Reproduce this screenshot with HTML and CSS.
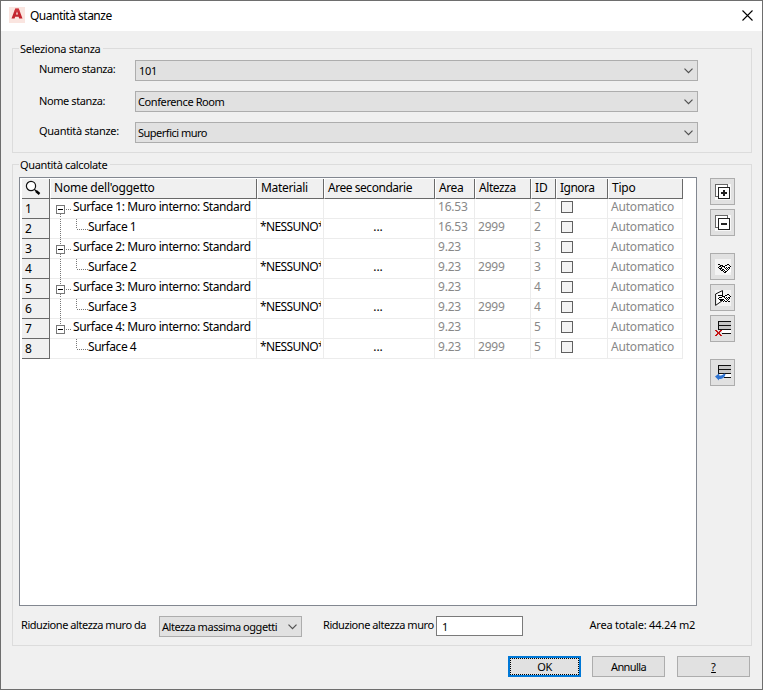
FILE: index.html
```html
<!DOCTYPE html>
<html lang="it">
<head>
<meta charset="utf-8">
<title>Quantità stanze</title>
<link rel="stylesheet" href="styles.css">
</head>
<body>
<main class="dialog">
  <header class="titlebar">
    <svg class="logo" width="16" height="16" viewBox="0 0 16 16"><rect width="16" height="16" fill="#fae5e0"/><path d="M2.5 11.500 6.300 1.500h3.400l3.800 10h-3.300l-.6-1.800H6.200l-.6 1.800z" fill="#c2252e"/><path d="M7 7.500 8 4.200l1 3.300z" fill="#fae5e0"/><path d="M6.300 1.500h3.400l1.600 4.200L8 4.200 4.700 5.700z" fill="#d9434a" opacity=".5"/></svg>
    <h1>Quantità stanze</h1>
    <svg class="close" width="11" height="11" viewBox="0 0 11 11"><path d="M.5.5l10 10M10.500.5l-10 10" stroke="#000" stroke-width="1.1"/></svg>
  </header>

  <section class="group select-group">
    <h2 class="caption sel-cap">Seleziona stanza</h2>
    <div class="field"><label class="l1">Numero stanza:</label><div class="combo"><span class="num">101</span><svg width="9" height="6" viewBox="0 0 9 6"><path d="M.5.7l4 4 4-4" fill="none" stroke="#505050" stroke-width="1.2"/></svg></div></div>
    <div class="field"><label class="l2">Nome stanza:</label><div class="combo"><span class="conf">Conference Room</span><svg width="9" height="6" viewBox="0 0 9 6"><path d="M.5.7l4 4 4-4" fill="none" stroke="#505050" stroke-width="1.2"/></svg></div></div>
    <div class="field"><label class="l3">Quantità stanze:</label><div class="combo"><span class="sup">Superfici muro</span><svg width="9" height="6" viewBox="0 0 9 6"><path d="M.5.7l4 4 4-4" fill="none" stroke="#505050" stroke-width="1.2"/></svg></div></div>
  </section>

  <section class="group calc-group">
    <h2 class="caption calc-cap">Quantità calcolate</h2>
    <div class="work">
      <div class="table">
        <div class="row head">
          <div class="corner"><svg width="16" height="16" viewBox="0 0 16 16"><circle cx="6" cy="6" r="4.6" fill="#fff" stroke="#111" stroke-width="1.2"/><path d="M9.4 9.400l2 2" stroke="#000" stroke-width="1.3"/><path d="M11 11l3.500 3" stroke="#000" stroke-width="2.4"/></svg></div>
          <div><span class="h-nome">Nome dell'oggetto</span></div><div><span class="h-mat">Materiali</span></div><div><span class="h-aree">Aree secondarie</span></div><div><span class="h-area">Area</span></div><div><span class="h-alt">Altezza</span></div><div>ID</div><div><span class="h-ign">Ignora</span></div><div><span class="h-tipo">Tipo</span></div>
        </div>
        <div id="rows"></div>
      </div>
      <nav class="tools">
        <button><svg width="16" height="16" viewBox="0 0 16 16" shape-rendering="crispEdges"><path fill="#f8f8f8" d="M0 0h16v16H0z"/><path fill="#fff" stroke="#666" d="M.5.5h12v12H.5z"/><path fill="#fff" stroke="#222" d="M3.500 3.500h11v11h-11z"/><path d="M6 9h6M9 6v6" stroke="#222" stroke-width="2"/></svg></button>
        <button><svg width="16" height="16" viewBox="0 0 16 16" shape-rendering="crispEdges"><path fill="#f8f8f8" d="M0 0h16v16H0z"/><path fill="#fff" stroke="#666" d="M.5.5h12v12H.5z"/><path fill="#fff" stroke="#222" d="M3.500 3.500h11v11h-11z"/><path d="M6 9h6" stroke="#222" stroke-width="2"/></svg></button>
        <button class="gap"><svg width="16" height="16" viewBox="0 0 16 16"><path fill="#f3f3f3" d="M0 0h16v16H0z"/><path fill="#fff" d="M8 6l8 2v5l-5 2-3-5z"/><g shape-rendering="crispEdges" fill="none" stroke="#000"><path d="M3 5.500h2M4 7.500h2M12 5.500h2M10 6.500h2M14 6.500h1M15 7.500h1M5 6.500h3M7 7.500h3M3 8.500h1M4 9.500h3M6 8.500h1M9 8.500h1M11 8.500h1M13 8.500h2M5 10.500h1M7 10.500h2M10 9.500h1M12 9.500h1M14 9.500h1M6 11.500h2M9 11.500h1M11 10.500h1M13 10.500h1M8 12.500h1M10 12.500h2M12 11.500h1M9 13.500h2"/></g></svg></button>
        <button><svg width="16" height="16" viewBox="0 0 16 16"><path fill="#f3f3f3" d="M0 0h16v16H0z"/><path d="M.6 4v11.400L7.500 10.500V.600z" fill="#fff" stroke="#111"/><path fill="#fff" d="M5 6l10 0v4l-5 3-5-3z"/><g transform="translate(0 -1)" shape-rendering="crispEdges" fill="none" stroke="#000"><path d="M3 6.500h2M4 8.500h2M12 5.500h2M10 6.500h2M14 6.500h1M15 7.500h1M5 6.500h3M7 7.500h3M3 9.500h1M4 10.500h3M6 8.500h1M9 8.500h1M11 8.500h1M13 8.500h2M5 11.500h1M7 10.500h2M10 9.500h1M12 9.500h1M14 9.500h1M6 11.500h2M9 11.500h1M11 10.500h1M13 10.500h1M8 12.500h1M10 12.500h2M12 11.500h1M13 12.500h2"/></g></svg></button>
        <button><svg width="16" height="16" viewBox="0 0 16 16" shape-rendering="crispEdges"><path fill="#c8c8c8" d="M3 1h13v8H3z"/><path fill="#fff" d="M7 9h9v4H7z"/><path d="M3.500 9V.5H16M3 4.500h13M3 8.500h13M7 12.500h9" fill="none" stroke="#111"/><path d="M.5 9l6 6M6.500 9l-6 6" stroke="#c41515" stroke-width="2"/></svg></button>
        <button class="gap"><svg width="16" height="16" viewBox="0 0 16 16"><g shape-rendering="crispEdges"><path fill="#c8c8c8" d="M3 1h13v8H3z"/><path fill="#fff" d="M5 9h11v4H5z"/><path d="M3.500 9V.5H16M3 4.500h13M3 8.500h13M9 12.500h7" fill="none" stroke="#111"/></g><path d="M0 11.500l4-3v2c2.500.1 4-.5 5-2l1.500.5C10 12 8 14 4 14v1.500z" fill="#2f73d0"/></svg></button>
      </nav>
    </div>
    <div class="footer">
      <span class="f1">Riduzione altezza muro da</span>
      <div class="combo small"><span class="amo">Altezza massima oggetti</span><svg width="9" height="6" viewBox="0 0 9 6"><path d="M.5.7l4 4 4-4" fill="none" stroke="#505050" stroke-width="1.2"/></svg></div>
      <span class="f2">Riduzione altezza muro</span>
      <div class="input">1</div>
      <span class="f3">Area totale: 44.24 m2</span>
    </div>
  </section>

  <div class="actions">
    <button class="btn ok"><span>OK</span></button><button class="btn"><span class="ann">Annulla</span></button><button class="btn"><u>?</u></button>
  </div>
</main>
<script src="rows.js"></script>
</body>
</html>
```
FILE: rows.js
```js
const rooms = [[1, '16.53', 2], [2, '9.23', 3], [3, '9.23', 4], [4, '9.23', 5]];
const dots = 'stroke="#777" stroke-dasharray="1 1" fill="none"';
let line = 0;
const row = (tree, name, mat, sub, area, height, id) =>
  `<div class="row"><div class="idx">${++line}</div><div class="name">${tree}${name}</div><div class="mat"><span>${mat}</span></div><div class="sub">${sub}</div><div class="v">${area}</div><div class="v">${height}</div><div class="v">${id}</div><div class="chk"><i></i></div><div class="v auto"><span>Automatico</span></div></div>`;
document.getElementById('rows').innerHTML = rooms.map(([n, area, id], i) => {
  const up = i > 0 ? `<path d="M10.5 0v6" ${dots}/>` : '';
  const down = i < 3 ? `<path d="M10.5 15v5" ${dots}/>` : '';
  const through = i < 3 ? `<path d="M10.5 0v20" ${dots}/>` : '';
  const parent = `<svg width="38" height="20" shape-rendering="crispEdges">${up}${down}<path d="M6.500 6.500h8v8h-8z" fill="#fff" stroke="#777"/><path d="M8 10.500h5" stroke="#000"/><path d="M16 10.500h6" ${dots}/></svg>`;
  const child = `<svg width="38" height="20" shape-rendering="crispEdges">${through}<path d="M26.500 0v10" ${dots}/><path d="M27 10.500h11" ${dots}/></svg>`;
  return row(parent, `<span class="parent">Surface ${n}: Muro interno: Standard</span>`, '', '', area, '', id)
    + row(child, `<span class="child">Surface ${n}</span>`, '*NESSUNO*', '...', area, '2999', id);
}).join('');
```
FILE: styles.css
```css
* { box-sizing: border-box; }
body { margin: 0; font: 11px/14px "Noto Sans", sans-serif; color: #000; }
.dialog { width: 763px; height: 690px; background: #f0f0f0; border: 1px solid #6e6e6e; display: flex; flex-direction: column; }
.titlebar { height: 30px; flex: none; background: #fff; display: flex; align-items: center; padding: 0 9px 0 8px; }
.logo { margin-top: -2px; }
h1 { font: 12px/16px "Noto Sans", sans-serif; margin: 0 auto 0 5px; letter-spacing: -.5px; white-space: nowrap; }
.close { margin-top: -2px; }
svg { display: block; flex: none; }
.group { border: 1px solid #dcdcdc; width: 740px; margin-left: 11px; flex: none; white-space: nowrap; }
.select-group { margin-top: 17px; height: 105px; }
.calc-group { margin-top: 11px; height: 482px; }
.caption { font: inherit; width: max-content; margin: -7px 0 0 6px; padding: 0 3px 0 1px; background: #f0f0f0; height: 14px; letter-spacing: -.3px; }
.calc-cap { letter-spacing: -.35px; }
.field { display: flex; height: 21px; margin: 0 0 10px 26px; }
.select-group .caption { margin-bottom: 4px; }
.field label { width: 96px; margin-top: 2px; letter-spacing: -.4px; }
.field .l2 { margin-top: 3px; }
.field .l3 { letter-spacing: -.3px; }
.combo { width: 563px; height: 21px; border: 1px solid #adadad; background: #e1e1e1; display: flex; align-items: center; justify-content: space-between; padding: 1px 4px 0 2px; letter-spacing: -.4px; }
.num { margin-left: 1px; letter-spacing: -.3px; }
.sup { letter-spacing: -.5px; }
.amo { letter-spacing: -.46px; }
.work { display: flex; margin: 5px 0 0 6px; }
.table { width: 678px; height: 429px; background: #fff; border: 1px solid #828790; padding: 1px 0 0 2px; font-size: 12px; line-height: 16px; }
.row { display: grid; grid-template-columns: 28px 207px 67px 111px 40px 56px 25px 52px 75px; height: 20px; width: 661px; }
.row > div { overflow: hidden; border-right: 1px solid #ececec; border-bottom: 1px solid #ececec; padding-left: 4px; }
.row.head > div { background: #f0f0f0; border-color: #696969; border-left: 1px solid #fff; padding: 1px 0 0 3px; }
.h-nome { letter-spacing: -.23px; }
.h-mat { letter-spacing: -.32px; }
.h-aree { letter-spacing: -.46px; }
.h-area, .h-alt { letter-spacing: -.42px; }
.h-ign { letter-spacing: -.5px; }
.h-tipo { letter-spacing: -.2px; }
.row.head .corner { border-left: 0; padding: 1px 0 0 3px; }
.row > .idx { background: #f0f0f0; border-color: #696969; padding: 2px 0 0 3px; }
.row > .name { display: flex; padding: 0; }
.parent { margin-left: -15px; letter-spacing: -.4px; }
.child { letter-spacing: -.45px; }
.mat span { display: block; width: 61px; overflow: hidden; letter-spacing: -.62px; }
.row > .mat { padding-left: 3px; }
.row > .sub { text-align: center; padding: 0 2px 0 0; }
.row > .v { color: #888; padding-left: 3px; letter-spacing: -.2px; }
.row > .chk { padding: 2px 0 0 5px; }
.chk i { display: block; width: 12px; height: 12px; border: 1px solid #606060; background: #f3f3f3; }
.tools { margin-left: 13px; }
.tools button { display: grid; place-items: center; width: 25px; height: 27px; border: 1px solid #adadad; background: #e1e1e1; padding: 0; margin: 0 0 4px; }
.tools button:first-child { margin-top: 1px; }
.tools .gap { margin-top: 17px; }
.footer { display: flex; margin: 10px 0 0 8px; height: 21px; }
.footer > span { margin-top: 2px; letter-spacing: -.2px; }
.footer .f1 { width: 138px; letter-spacing: -.44px; }
.combo.small { width: 143px; }
.footer .f2 { margin-left: 21px; width: 113px; letter-spacing: -.44px; }
.input { width: 87px; height: 20px; border: 1px solid #7a7a7a; background: #fff; padding: 3px 5px; }
.footer .f3 { margin-left: 66.500px; }
.actions { display: flex; margin: 10px 0 0 507px; }
.btn { width: 73px; height: 21px; margin: 0 11px 0 0; padding: 0; border: 1px solid #adadad; background: #e1e1e1; font: inherit; color: #000; }
.ann { letter-spacing: -.6px; }
.btn:last-child { margin-left: 1px; }
.btn.ok { border: 2px solid #0078d7; outline: 1px dotted #000; outline-offset: -3px; letter-spacing: -.4px; }
```
